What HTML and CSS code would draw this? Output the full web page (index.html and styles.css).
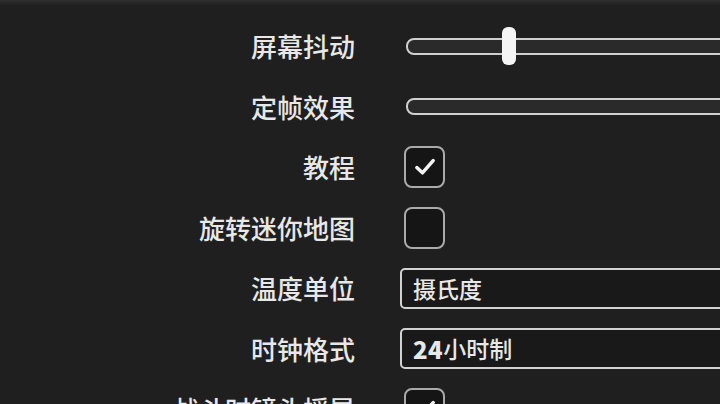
FILE: index.html
```html
<!DOCTYPE html>
<html>
  <head>
    <meta charset="utf-8">
    <title>设置</title>
    <link rel="stylesheet" href="styles.css">
  </head>
  <body>
    <div class="topline"></div>
    <div class="settings">
      <div class="row">
        <span class="label">屏幕抖动</span>
        <div class="slider">
          <div class="track"></div>
          <div class="thumb" style="left: 96px"></div>
        </div>
      </div>
      <div class="row">
        <span class="label">定帧效果</span>
        <div class="slider">
          <div class="track"></div>
        </div>
      </div>
      <div class="row">
        <span class="label">教程</span>
        <div class="checkbox checked">
          <svg viewBox="0 0 24 24" width="28" height="28"><path d="M5 12.5 L9.8 17 L19 6.5" fill="none" stroke="#f2f2f2" stroke-width="3" stroke-linecap="round" stroke-linejoin="round"/></svg>
        </div>
      </div>
      <div class="row">
        <span class="label">旋转迷你地图</span>
        <div class="checkbox"></div>
      </div>
      <div class="row">
        <span class="label">温度单位</span>
        <div class="select">摄氏度</div>
      </div>
      <div class="row">
        <span class="label">时钟格式</span>
        <div class="select"><b>24</b>小时制</div>
      </div>
      <div class="row">
        <span class="label">战斗时镜头摇晃</span>
        <div class="checkbox checked">
          <svg viewBox="0 0 24 24" width="28" height="28"><path d="M5 12.5 L9.8 17 L19 6.5" fill="none" stroke="#f2f2f2" stroke-width="3" stroke-linecap="round" stroke-linejoin="round"/></svg>
        </div>
      </div>
    </div>
  </body>
</html>
```

FILE: styles.css
```css
:root {
  --bg-color: #1f1f1f;
  --text-color: #e8e8e8;
  --line-color: #cfcfcf;
  --box-color: #151515;
}

*, *:before, *:after {
  box-sizing: border-box;
}

html, body {
  margin: 0;
  padding: 0;
  height: 100%;
  background: var(--bg-color);
  overflow: hidden;
}

body {
  font-family: "Noto Sans CJK SC", "Noto Sans", sans-serif;
  color: var(--text-color);
}

.topline {
  height: 6px;
  margin-bottom: -6px;
  background: linear-gradient(#2e2e2e, var(--bg-color));
}

.settings {
  padding-top: 16px;
  display: flex;
  flex-direction: column;
}

.row {
  height: 60.5px;
  display: flex;
  align-items: center;
}

.label {
  width: 355px;
  text-align: right;
  font-size: 26px;
  font-weight: 500;
  line-height: 1;
  white-space: nowrap;
  flex: 0 0 auto;
}

/*----- SLIDER -----*/

.slider {
  position: relative;
  margin-left: 51px;
  width: 400px;
  height: 38px;
  display: flex;
  align-items: center;
  flex: 0 0 auto;
}

.slider .track {
  width: 100%;
  height: 17px;
  border: 2.5px solid var(--line-color);
  border-radius: 8px;
  background: #2a2a2a;
}

.slider .thumb {
  position: absolute;
  top: 0;
  width: 14px;
  height: 38px;
  border-radius: 6px;
  background: #f4f4f4;
}

/*----- CHECKBOX -----*/

.checkbox {
  margin-left: 49px;
  width: 41px;
  height: 42px;
  border: 2.5px solid #aaaaaa;
  border-radius: 8px;
  background: var(--box-color);
  display: flex;
  align-items: center;
  justify-content: center;
  flex: 0 0 auto;
}

/*----- SELECT -----*/

.select {
  margin-left: 45px;
  width: 400px;
  height: 41px;
  border: 2.5px solid #d2d2d2;
  border-radius: 5px;
  background: #191919;
  padding-left: 11px;
  display: flex;
  align-items: center;
  font-size: 23px;
  font-weight: 500;
  line-height: 1;
  flex: 0 0 auto;
}

.select b {
  font-weight: 900;
  letter-spacing: 0.5px;
  font-size: 24px;
}
```
